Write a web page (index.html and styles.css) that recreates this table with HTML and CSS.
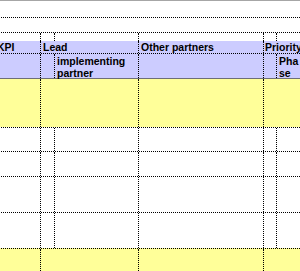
FILE: index.html
```html
<!DOCTYPE html>
<html>
<head>
<meta charset="utf-8">
<link rel="stylesheet" href="styles.css">
</head>
<body>
<div class="sheet">
  <div class="row r-a"></div>
  <div class="row r-b"></div>
  <div class="row r-c">
    <div class="cell c0"></div>
    <div class="cell c1 vl"></div>
    <div class="cell c2 vl"></div>
    <div class="cell c3 vl"></div>
    <div class="cell c4 vl"></div>
    <div class="cell c5 vl"></div>
  </div>
  <div class="row r-d blue head">
    <div class="cell c0">KPI</div>
    <div class="cell c12 vl">Lead</div>
    <div class="cell c3 vl">Other partners</div>
    <div class="cell c45 vl">Priority</div>
  </div>
  <div class="row r-e blue sub">
    <div class="cell c0"></div>
    <div class="cell c1 vl"></div>
    <div class="cell c2 vl">implementing partner</div>
    <div class="cell c3 vl"></div>
    <div class="cell c4 vl"></div>
    <div class="cell c5 vl">Phase</div>
  </div>
  <div class="row r-f yellow">
    <div class="cell c0"></div>
    <div class="cell c12 vl"></div>
    <div class="cell c3 vl"></div>
    <div class="cell c45 vl"></div>
  </div>
  <div class="row r-g">
    <div class="cell c0"></div>
    <div class="cell c1 vl"></div>
    <div class="cell c2 vl"></div>
    <div class="cell c3 vl"></div>
    <div class="cell c4 vl"></div>
    <div class="cell c5 vl"></div>
  </div>
  <div class="row r-h">
    <div class="cell c0"></div>
    <div class="cell c1 vl"></div>
    <div class="cell c2 vl"></div>
    <div class="cell c3 vl"></div>
    <div class="cell c4 vl"></div>
    <div class="cell c5 vl"></div>
  </div>
  <div class="row r-i">
    <div class="cell c0"></div>
    <div class="cell c1 vl"></div>
    <div class="cell c2 vl"></div>
    <div class="cell c3 vl"></div>
    <div class="cell c4 vl"></div>
    <div class="cell c5 vl"></div>
  </div>
  <div class="row r-j">
    <div class="cell c0"></div>
    <div class="cell c1 vl"></div>
    <div class="cell c2 vl"></div>
    <div class="cell c3 vl"></div>
    <div class="cell c4 vl"></div>
    <div class="cell c5 vl"></div>
  </div>
  <div class="row r-k yellow">
    <div class="cell c0"></div>
    <div class="cell c12 vl"></div>
    <div class="cell c3 vl"></div>
    <div class="cell c45 vl"></div>
  </div>
</div>
</body>
</html>
```
FILE: styles.css
```css
html, body {
  margin: 0;
  padding: 0;
  background: #ffffff;
  overflow: hidden;
  width: 300px;
  height: 271px;
}
.sheet {
  margin-left: -5px;
  width: 305px;
  font-family: "Liberation Sans", Arial, sans-serif;
  font-weight: bold;
  font-size: 10.5px;
  line-height: 12px;
  color: #000;
}
.row {
  display: flex;
  box-sizing: border-box;
}
.cell {
  flex: none;
  box-sizing: border-box;
  padding-left: 2px;
}
.vl { border-left: 1px dotted #000; }
.c0 { width: 45px; }
.c1 { width: 14px; }
.c2 { width: 84px; }
.c12 { width: 98px; }
.c3 { width: 125px; }
.c4 { width: 13px; }
.c5 { width: 24px; word-break: break-all; }
.c45 { width: 37px; }

.blue { background: #ccccff; }
.yellow { background: #ffff99; }

.head .cell { white-space: nowrap; padding-top: 1px; line-height: 11px; }
.head .c45 { padding-left: 1px; }
.sub .cell { padding-top: 1px; }

.r-a { height: 18px; border-top: 1px solid #a6a6a6; border-bottom: 1px dotted #000; }
.r-b { height: 15px; border-bottom: 1px dotted #000; }
.r-c { height: 8px; }
.r-d { height: 13px; border-bottom: 1px dotted #000; }
.r-e { height: 25px; border-bottom: 1px solid #6e6e78; }
.r-f { height: 48px; }
.r-g { height: 24px; border-top: 1px dotted #000; }
.r-h { height: 25px; border-top: 1px dotted #000; }
.r-i { height: 36px; border-top: 1px dotted #000; }
.r-j { height: 36px; border-top: 1px dotted #000; }
.r-k { height: 23px; border-top: 1px dotted #000; }
```
